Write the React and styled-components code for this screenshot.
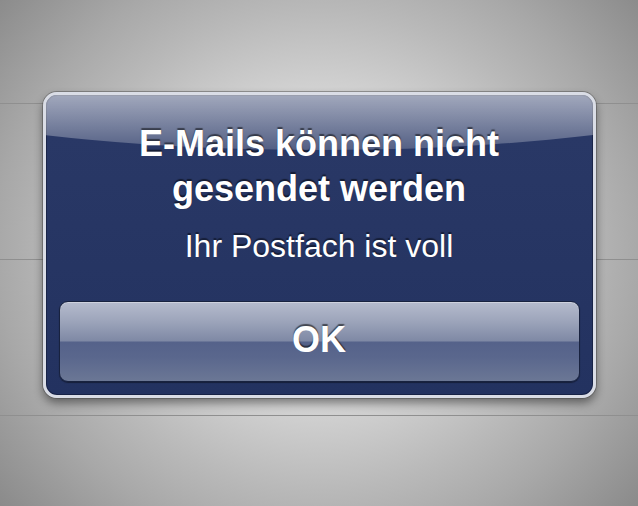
import React from "react";
import styled, { createGlobalStyle } from "styled-components";

const GlobalStyle = createGlobalStyle`
  html, body, #root {
    margin: 0;
    height: 100%;
  }
  body {
    background: #a8a8a8;
  }
`;

// Blurred table behind the alert: soft grey vignette with row separators.
const Page = styled.main`
  min-height: 100%;
  box-sizing: border-box;
  padding-top: 92px;
  display: flex;
  justify-content: center;
  align-items: flex-start;
  background:
    linear-gradient(#8f8f8f, #8f8f8f) 0 103px / 100% 1px no-repeat,
    linear-gradient(#8f8f8f, #8f8f8f) 0 259px / 100% 1px no-repeat,
    linear-gradient(#8f8f8f, #8f8f8f) 0 415px / 100% 1px no-repeat,
    radial-gradient(
      ellipse 430px 400px at 50% 250px,
      #e0e0e0 0%,
      #d4d4d4 38%,
      #b9b9b9 60%,
      #a8a8a8 75%,
      #8e8e8e 95%,
      #888888 100%
    );
`;

const Alert = styled.section`
  position: relative;
  width: 553px;
  box-sizing: border-box;
  padding: 26px 13px 13px;
  border: 3px solid #dadde6;
  border-radius: 14px;
  background: linear-gradient(to bottom, #2a3967, #233260);
  box-shadow:
    0 0 0 1px rgba(70, 70, 70, 0.45),
    0 5px 10px rgba(0, 0, 0, 0.45),
    inset 0 0 0 1px rgba(15, 22, 50, 0.55);
  overflow: hidden;
  text-align: center;
  color: #fff;
  font-family: "Liberation Sans", Arial, Helvetica, sans-serif;

  /* curved glass highlight across the top */
  &::before {
    content: "";
    position: absolute;
    left: 50%;
    top: -215px;
    width: 1200px;
    height: 270px;
    margin-left: -600px;
    border-radius: 50%;
    background: linear-gradient(
      to bottom,
      rgba(255, 255, 255, 0.58) 212px,
      rgba(255, 255, 255, 0.2) 270px
    );
    pointer-events: none;
  }
`;

const Title = styled.h2`
  position: relative;
  margin: 0;
  font-size: 36px;
  line-height: 45px;
  font-weight: 700;
  text-shadow: 0 -2px 1px rgba(0, 0, 0, 0.5);
`;

const Message = styled.p`
  position: relative;
  margin: 16px 0 0;
  font-size: 32px;
  line-height: 38px;
  font-weight: 400;
  text-shadow: 0 -2px 1px rgba(0, 0, 0, 0.45);
`;

const Button = styled.button`
  position: relative;
  display: flex;
  align-items: center;
  justify-content: center;
  width: 100%;
  height: 81px;
  box-sizing: border-box;
  margin-top: 36px;
  padding: 0 0 3px;
  border: 1px solid #18223f;
  border-radius: 9px;
  background: linear-gradient(
    to bottom,
    #b5bbcd 0%,
    #9ca4ba 25%,
    #7f89a5 49%,
    #55628a 51%,
    #5a678d 70%,
    #6b7795 100%
  );
  box-shadow:
    inset 0 1px 0 rgba(255, 255, 255, 0.35),
    0 1px 1px rgba(0, 0, 0, 0.4);
  color: #fff;
  font-family: inherit;
  font-size: 36px;
  font-weight: 700;
  text-shadow: 0 -2px 1px rgba(0, 0, 0, 0.55);
  cursor: pointer;
`;

export default function App() {
  return (
    <>
      <GlobalStyle />
      <Page>
        <Alert role="alertdialog">
          <Title>
            E-Mails können nicht
            <br />
            gesendet werden
          </Title>
          <Message>Ihr Postfach ist voll</Message>
          <Button type="button">OK</Button>
        </Alert>
      </Page>
    </>
  );
}
